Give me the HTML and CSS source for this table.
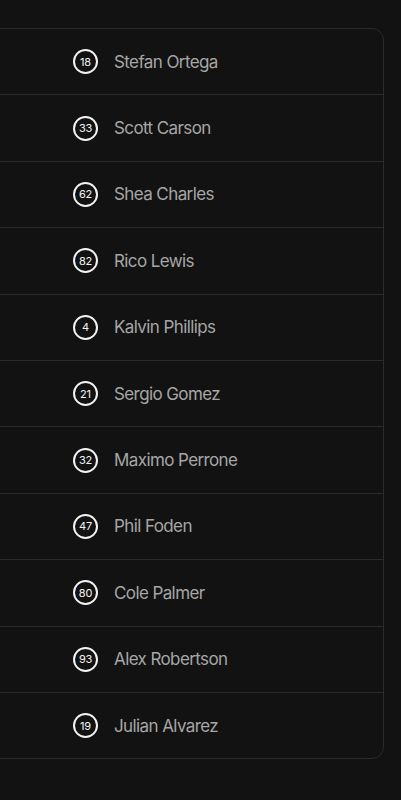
FILE: index.html
```html
<!DOCTYPE html>
<html>
<head>
<meta charset="utf-8">
<link rel="stylesheet" href="styles.css">
</head>
<body>
<div class="page">
  <div class="card">
    <div class="row"><span class="num">18</span><span class="name">Stefan Ortega</span></div>
    <div class="row"><span class="num">33</span><span class="name">Scott Carson</span></div>
    <div class="row"><span class="num">62</span><span class="name">Shea Charles</span></div>
    <div class="row"><span class="num">82</span><span class="name">Rico Lewis</span></div>
    <div class="row"><span class="num">4</span><span class="name">Kalvin Phillips</span></div>
    <div class="row"><span class="num">21</span><span class="name">Sergio Gomez</span></div>
    <div class="row"><span class="num">32</span><span class="name">Maximo Perrone</span></div>
    <div class="row"><span class="num">47</span><span class="name">Phil Foden</span></div>
    <div class="row"><span class="num">80</span><span class="name">Cole Palmer</span></div>
    <div class="row"><span class="num">93</span><span class="name">Alex Robertson</span></div>
    <div class="row"><span class="num">19</span><span class="name">Julian Alvarez</span></div>
  </div>
</div>
</body>
</html>
```
FILE: styles.css
```css
html, body {
  margin: 0;
  padding: 0;
  background: #121212;
}
body {
  font-family: Inter, "Noto Sans", sans-serif;
  overflow: hidden;
}
.page {
  padding-top: 28px;
  width: 401px;
  height: 800px;
  box-sizing: border-box;
  overflow: hidden;
}
.card {
  margin-left: -40px;
  margin-right: 17px;
  border: 1px solid #2a2a2a;
  border-radius: 12px;
  background: #121212;
}
.row {
  display: flex;
  align-items: center;
  gap: 16px;
  height: 65.4px;
  padding-left: 112px;
  border-bottom: 1px solid #2a2a2a;
}
.row:last-child {
  border-bottom: none;
}
.num {
  width: 25px;
  height: 25px;
  box-sizing: border-box;
  border: 2px solid #f2f2f2;
  border-radius: 50%;
  display: flex;
  align-items: center;
  justify-content: center;
  color: #f2f2f2;
  font-size: 11px;
  font-weight: 400;
  letter-spacing: -0.2px;
  flex: none;
}
.name {
  color: #a6a6a6;
  font-size: 17px;
  letter-spacing: -0.6px;
}
```
